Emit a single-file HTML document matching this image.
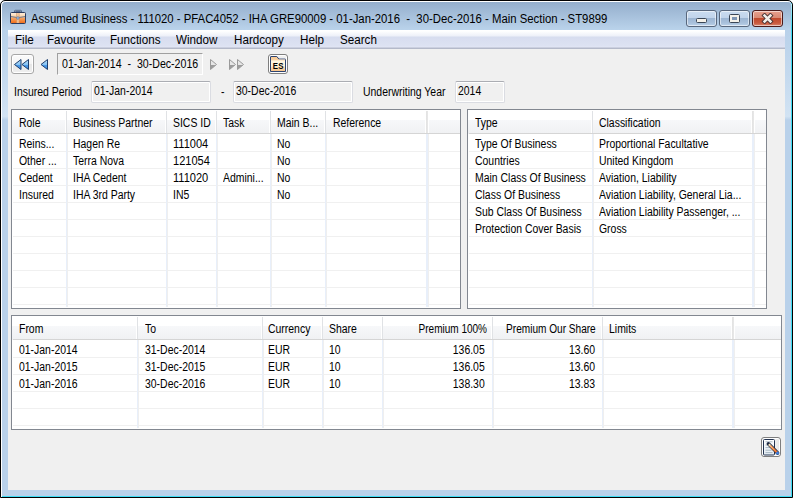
<!DOCTYPE html>
<html><head><meta charset="utf-8"><style>
html,body{margin:0;padding:0;}
body{width:793px;height:498px;overflow:hidden;position:relative;background:#FFFFFF;font-family:"Liberation Sans",sans-serif;}
#frame{position:absolute;left:0;top:0;width:793px;height:498px;box-sizing:border-box;border:1px solid #000;border-radius:5px 5px 0 0;background:#B9D1EA;box-shadow:inset 1px 1px 0 #FFFFFF, inset -1px -1px 0 #3DDCF4;}
.t{position:absolute;white-space:pre;line-height:1;transform-origin:0 0;}
.t.r{transform-origin:100% 0;}
</style></head><body>
<div id="frame"></div>
<div style="position:absolute;left:2px;top:2px;width:789px;height:28px;background:linear-gradient(#94AECC,#BAD3EB);border-radius:4px 4px 0 0"></div>
<svg style="position:absolute;left:9px;top:9px" width="18" height="16" viewBox="0 0 18 16">
<defs><linearGradient id="bc" x1="0" y1="0" x2="0" y2="1"><stop offset="0" stop-color="#FEF0E0"/><stop offset=".4" stop-color="#FAD2A8"/><stop offset=".5" stop-color="#F6A564"/><stop offset="1" stop-color="#F06A14"/></linearGradient>
<linearGradient id="hd" x1="0" y1="0" x2="0" y2="1"><stop offset="0" stop-color="#C8D6E8"/><stop offset="1" stop-color="#6F86A8"/></linearGradient></defs>
<path d="M5.5 3.8 V2.1 Q5.5 1.3 6.3 1.3 H11.7 Q12.5 1.3 12.5 2.1 V3.8 H11.3 V2.6 H6.7 V3.8 Z" fill="url(#hd)" stroke="#3D5275" stroke-width=".8"/>
<rect x="1.5" y="3.5" width="15" height="11" rx="1" fill="url(#bc)" stroke="#2B3C5E"/>
<path d="M2 7.6 Q9 9.6 16 7.6" fill="none" stroke="#5A6A86" stroke-width=".9"/>
<rect x="7.6" y="4" width="2.6" height="10" fill="#F3C89C" opacity=".9"/>
<path d="M7.6 4 V14 M10.2 4 V14" stroke="#C98A5A" stroke-width=".5"/>
<circle cx="8.9" cy="9" r="1.3" fill="#A9C6E6" stroke="#4A6A98" stroke-width=".6"/>
</svg>
<div style="position:absolute;left:2px;top:30px;width:6px;height:90px;background:linear-gradient(#B9D1EA 0%,#C4D9EE 50%,#D2E3F3 96%,#B9D1EA 100%)"></div>
<div style="position:absolute;left:785px;top:30px;width:6px;height:90px;background:linear-gradient(#B9D1EA 0%,#C4D9EE 50%,#D2E3F3 96%,#B9D1EA 100%)"></div>
<div style="position:absolute;left:791px;top:4px;width:1px;height:24px;background:linear-gradient(#B8ECF8,#3DDCF4)"></div>
<div class="t" style="left:30.6px;top:12.84px;font-size:12px;transform:scaleX(0.945);color:#000;">Assumed Business - 111020 - PFAC4052 - IHA GRE90009 - 01-Jan-2016&nbsp; -&nbsp; 30-Dec-2016 - Main Section - ST9899</div>
<div style="position:absolute;left:686px;top:10px;width:31px;height:17px;box-sizing:border-box;border:1px solid #58677D;border-radius:3px;background:linear-gradient(#CADCF0 0%,#C1D4EB 45%,#9DB6D3 50%,#A9C1DC 80%,#BCD2EA 100%);box-shadow:inset 0 0 0 1px rgba(255,255,255,.55)"></div>
<div style="position:absolute;left:719px;top:10px;width:31px;height:17px;box-sizing:border-box;border:1px solid #58677D;border-radius:3px;background:linear-gradient(#CADCF0 0%,#C1D4EB 45%,#9DB6D3 50%,#A9C1DC 80%,#BCD2EA 100%);box-shadow:inset 0 0 0 1px rgba(255,255,255,.55)"></div>
<div style="position:absolute;left:752px;top:10px;width:31px;height:17px;box-sizing:border-box;border:1px solid #4A1A1A;border-radius:3px;background:linear-gradient(#E8A08E 0%,#D98A75 45%,#C04A2E 50%,#C95A3E 80%,#D88670 100%);box-shadow:inset 0 0 0 1px rgba(255,255,255,.55)"></div>
<div style="position:absolute;left:696px;top:18px;width:11px;height:5px;box-sizing:border-box;border:1px solid #3A4656;border-radius:1.5px;background:#F4F1EA"></div>
<div style="position:absolute;left:729px;top:14px;width:11px;height:9px;box-sizing:border-box;border:1px solid #3A4656;border-radius:1.5px;background:#F4F1EA"></div>
<div style="position:absolute;left:732px;top:17px;width:5px;height:3px;background:#7F96B4;border:0"></div>
<svg style="position:absolute;left:761px;top:13px" width="13" height="11" viewBox="0 0 13 11">
<path d="M3.6 2.6 L9.4 8.4 M9.4 2.6 L3.6 8.4" stroke="#4A3434" stroke-width="4.4" stroke-linecap="square"/>
<path d="M3.6 2.6 L9.4 8.4 M9.4 2.6 L3.6 8.4" stroke="#F2EEEA" stroke-width="2.6" stroke-linecap="square"/>
</svg>
<div style="position:absolute;left:8px;top:30px;width:777px;height:19px;background:linear-gradient(#FFFFFF 0px,#FFFFFF 1px,#EDF0F8 6px,#D7DDEF 7px,#DDE2F2 16px,#E2E6F5 17px,#B4B9C9 18px)"></div>
<div class="t" style="left:15.1px;top:33.84px;font-size:12px;transform:scaleX(0.97);color:#000;">File</div>
<div class="t" style="left:47.2px;top:33.84px;font-size:12px;transform:scaleX(0.97);color:#000;">Favourite</div>
<div class="t" style="left:110.2px;top:33.84px;font-size:12px;transform:scaleX(0.97);color:#000;">Functions</div>
<div class="t" style="left:175.8px;top:33.84px;font-size:12px;transform:scaleX(0.97);color:#000;">Window</div>
<div class="t" style="left:234px;top:33.84px;font-size:12px;transform:scaleX(0.97);color:#000;">Hardcopy</div>
<div class="t" style="left:300px;top:33.84px;font-size:12px;transform:scaleX(0.97);color:#000;">Help</div>
<div class="t" style="left:339.5px;top:33.84px;font-size:12px;transform:scaleX(0.97);color:#000;">Search</div>
<div style="position:absolute;left:8px;top:49px;width:777px;height:441px;background:#F0F0F0"></div>
<div style="position:absolute;left:11px;top:54px;width:23px;height:20px;box-sizing:border-box;border:1px solid #A7A7A7;border-radius:3px;background:linear-gradient(#FBFBFB 0%,#F4F4F4 50%,#E6E6E6 52%,#EFEFEF 100%);box-shadow:inset 0 0 0 1px #FFF"></div>
<svg style="position:absolute;left:0;top:0" width="793" height="120">
<defs><linearGradient id="bl" x1="0" y1="0" x2="0" y2="1"><stop offset="0" stop-color="#B9E0FB"/><stop offset=".5" stop-color="#88C4F4"/><stop offset=".55" stop-color="#4C9CEA"/><stop offset="1" stop-color="#3B8AE0"/></linearGradient>
<linearGradient id="gr" x1="0" y1="0" x2="0" y2="1"><stop offset="0" stop-color="#E6E6E6"/><stop offset=".55" stop-color="#E6E6E6"/><stop offset=".56" stop-color="#9C9C9C"/><stop offset="1" stop-color="#9C9C9C"/></linearGradient></defs>
<path d="M21 59.5 L14.5 64.5 L21 69.5 Z" fill="url(#bl)" stroke="#1F3F6E" stroke-linejoin="round"/>
<path d="M28.5 59.5 L22 64.5 L28.5 69.5 Z" fill="url(#bl)" stroke="#1F3F6E" stroke-linejoin="round"/>
<path d="M47.5 59.5 L41 64.5 L47.5 69.5 Z" fill="url(#bl)" stroke="#1F3F6E" stroke-linejoin="round"/>
<path d="M210.5 59.5 L216.5 64.5 L210.5 69.5 Z" fill="url(#gr)" stroke="#9A9A9A" stroke-linejoin="round"/>
<path d="M229.5 59.5 L235.5 64.5 L229.5 69.5 Z" fill="url(#gr)" stroke="#9A9A9A" stroke-linejoin="round"/>
<path d="M237.5 59.5 L243.5 64.5 L237.5 69.5 Z" fill="url(#gr)" stroke="#9A9A9A" stroke-linejoin="round"/>
</svg>
<div style="position:absolute;left:57px;top:53px;width:146px;height:22px;box-sizing:border-box;border-top:1px solid #A0A0A0;border-left:1px solid #A0A0A0;border-right:1px solid #FFFFFF;border-bottom:1px solid #FFFFFF;background:#F0F0F0"></div>
<div class="t" style="left:62px;top:57.84px;font-size:12px;transform:scaleX(0.884);color:#000;">01-Jan-2014&nbsp; -&nbsp; 30-Dec-2016</div>
<div style="position:absolute;left:268px;top:54px;width:20px;height:20px;box-sizing:border-box;border:1px solid #7E7E7E;border-radius:3px;background:#F0F0F0;box-shadow:inset 0 0 0 1px #FFF"></div>
<svg style="position:absolute;left:270px;top:56px" width="16" height="16" viewBox="0 0 16 16">
<defs><linearGradient id="fo" x1="0" y1="0" x2="0" y2="1"><stop offset="0" stop-color="#F7C48A"/><stop offset=".22" stop-color="#F9D3A6"/><stop offset=".3" stop-color="#FFF6E2"/><stop offset=".62" stop-color="#FFF3DA"/><stop offset=".75" stop-color="#FAD9B0"/><stop offset="1" stop-color="#F6C084"/></linearGradient></defs>
<path d="M0.5 15.5 V1 Q0.5 0.5 1 0.5 H6.8 L8.8 3 H15 Q15.5 3 15.5 3.5 V15.5 Z" fill="url(#fo)" stroke="#2E4470"/>
<path d="M9 3.2 H15.2" stroke="#FFFFFF" stroke-width=".6" opacity=".8"/>
<text x="2.8" y="12.6" font-family="Liberation Sans" font-weight="bold" font-size="9.6" fill="#000" transform="scale(.82,1)" transform-origin="2.8 12.6" letter-spacing=".3">ES</text>
</svg>
<div class="t" style="left:14px;top:85.84px;font-size:12px;transform:scaleX(0.87);color:#000;">Insured Period</div>
<div style="position:absolute;left:91px;top:81px;width:120px;height:22px;box-sizing:border-box;border:1px solid #DADCE2;border-top-color:#ABADB3;border-radius:2px;background:#F0F0F0;box-shadow:inset 0 0 0 1px #FFFFFF"></div>
<div class="t" style="left:94px;top:85.34px;font-size:12px;transform:scaleX(0.87);color:#000;">01-Jan-2014</div>
<div class="t" style="left:221px;top:85.84px;font-size:12px;transform:scaleX(0.87);color:#000;">-</div>
<div style="position:absolute;left:233px;top:81px;width:120px;height:22px;box-sizing:border-box;border:1px solid #DADCE2;border-top-color:#ABADB3;border-radius:2px;background:#F0F0F0;box-shadow:inset 0 0 0 1px #FFFFFF"></div>
<div class="t" style="left:236px;top:85.34px;font-size:12px;transform:scaleX(0.87);color:#000;">30-Dec-2016</div>
<div class="t" style="left:362.5px;top:85.84px;font-size:12px;transform:scaleX(0.87);color:#000;">Underwriting Year</div>
<div style="position:absolute;left:455px;top:81px;width:50px;height:22px;box-sizing:border-box;border:1px solid #DADCE2;border-top-color:#ABADB3;border-radius:2px;background:#F0F0F0;box-shadow:inset 0 0 0 1px #FFFFFF"></div>
<div class="t" style="left:458px;top:85.34px;font-size:12px;transform:scaleX(0.87);color:#000;">2014</div>
<div style="position:absolute;left:11px;top:109px;width:450px;height:200px;box-sizing:border-box;border:1px solid #828790;background:#FFFFFF"></div>
<div style="position:absolute;left:12px;top:110px;width:448px;height:24px;background:linear-gradient(#FFFFFF 0px,#FFFFFF 10px,#F7F8FA 10px,#F0F1F3 100%)"></div>
<div style="position:absolute;left:13px;top:133px;width:447px;height:1px;background:#D5D5D5"></div>
<div style="position:absolute;left:65px;top:111px;width:1px;height:22px;background:#FFFFFF"></div>
<div style="position:absolute;left:66px;top:111px;width:1px;height:22px;background:#E0E2E5"></div>
<div style="position:absolute;left:165px;top:111px;width:1px;height:22px;background:#FFFFFF"></div>
<div style="position:absolute;left:166px;top:111px;width:1px;height:22px;background:#E0E2E5"></div>
<div style="position:absolute;left:215px;top:111px;width:1px;height:22px;background:#FFFFFF"></div>
<div style="position:absolute;left:216px;top:111px;width:1px;height:22px;background:#E0E2E5"></div>
<div style="position:absolute;left:269px;top:111px;width:1px;height:22px;background:#FFFFFF"></div>
<div style="position:absolute;left:270px;top:111px;width:1px;height:22px;background:#E0E2E5"></div>
<div style="position:absolute;left:324px;top:111px;width:1px;height:22px;background:#FFFFFF"></div>
<div style="position:absolute;left:325px;top:111px;width:1px;height:22px;background:#E0E2E5"></div>
<div style="position:absolute;left:425px;top:111px;width:1px;height:22px;background:#FFFFFF"></div>
<div style="position:absolute;left:426px;top:111px;width:2px;height:22px;background:linear-gradient(90deg,#E2E2E2,#E8E8E8)"></div>
<div style="position:absolute;left:428px;top:111px;width:1px;height:22px;background:#FFFFFF"></div>
<div style="position:absolute;left:13px;top:151px;width:447px;height:1px;background:#F0F0F0"></div>
<div style="position:absolute;left:13px;top:168px;width:447px;height:1px;background:#F0F0F0"></div>
<div style="position:absolute;left:13px;top:185px;width:447px;height:1px;background:#F0F0F0"></div>
<div style="position:absolute;left:13px;top:202px;width:447px;height:1px;background:#F0F0F0"></div>
<div style="position:absolute;left:13px;top:219px;width:447px;height:1px;background:#F0F0F0"></div>
<div style="position:absolute;left:13px;top:236px;width:447px;height:1px;background:#F0F0F0"></div>
<div style="position:absolute;left:13px;top:253px;width:447px;height:1px;background:#F0F0F0"></div>
<div style="position:absolute;left:13px;top:270px;width:447px;height:1px;background:#F0F0F0"></div>
<div style="position:absolute;left:13px;top:287px;width:447px;height:1px;background:#F0F0F0"></div>
<div style="position:absolute;left:13px;top:304px;width:447px;height:1px;background:#F0F0F0"></div>
<div style="position:absolute;left:66px;top:134px;width:1px;height:173px;background:#E8EFFA"></div>
<div style="position:absolute;left:67px;top:134px;width:1px;height:173px;background:#EFEFEF"></div>
<div style="position:absolute;left:166px;top:134px;width:1px;height:173px;background:#E8EFFA"></div>
<div style="position:absolute;left:167px;top:134px;width:1px;height:173px;background:#EFEFEF"></div>
<div style="position:absolute;left:216px;top:134px;width:1px;height:173px;background:#E8EFFA"></div>
<div style="position:absolute;left:217px;top:134px;width:1px;height:173px;background:#EFEFEF"></div>
<div style="position:absolute;left:270px;top:134px;width:1px;height:173px;background:#E8EFFA"></div>
<div style="position:absolute;left:271px;top:134px;width:1px;height:173px;background:#EFEFEF"></div>
<div style="position:absolute;left:325px;top:134px;width:1px;height:173px;background:#E8EFFA"></div>
<div style="position:absolute;left:326px;top:134px;width:1px;height:173px;background:#EFEFEF"></div>
<div style="position:absolute;left:426px;top:134px;width:1px;height:173px;background:#E8EFFA"></div>
<div style="position:absolute;left:427px;top:134px;width:1px;height:173px;background:#E8EFFA"></div>
<div style="position:absolute;left:428px;top:134px;width:1px;height:173px;background:#EFEFEF"></div>
<div class="t" style="left:18.8px;top:116.84px;font-size:12px;transform:scaleX(0.87);color:#000;">Role</div>
<div class="t" style="left:73.1px;top:116.84px;font-size:12px;transform:scaleX(0.87);color:#000;">Business Partner</div>
<div class="t" style="left:173.4px;top:116.84px;font-size:12px;transform:scaleX(0.87);color:#000;">SICS ID</div>
<div class="t" style="left:223.2px;top:116.84px;font-size:12px;transform:scaleX(0.87);color:#000;">Task</div>
<div class="t" style="left:277px;top:116.84px;font-size:12px;transform:scaleX(0.87);color:#000;">Main B...</div>
<div class="t" style="left:332.5px;top:116.84px;font-size:12px;transform:scaleX(0.87);color:#000;">Reference</div>
<div class="t" style="left:18.8px;top:137.84px;font-size:12px;transform:scaleX(0.87);color:#000;">Reins...</div>
<div class="t" style="left:73.1px;top:137.84px;font-size:12px;transform:scaleX(0.87);color:#000;">Hagen Re</div>
<div class="t" style="left:173.4px;top:137.84px;font-size:12px;transform:scaleX(0.92);color:#000;">111004</div>
<div class="t" style="left:277px;top:137.84px;font-size:12px;transform:scaleX(0.87);color:#000;">No</div>
<div class="t" style="left:18.8px;top:154.84px;font-size:12px;transform:scaleX(0.87);color:#000;">Other ...</div>
<div class="t" style="left:73.1px;top:154.84px;font-size:12px;transform:scaleX(0.87);color:#000;">Terra Nova</div>
<div class="t" style="left:173.4px;top:154.84px;font-size:12px;transform:scaleX(0.92);color:#000;">121054</div>
<div class="t" style="left:277px;top:154.84px;font-size:12px;transform:scaleX(0.87);color:#000;">No</div>
<div class="t" style="left:18.8px;top:171.84px;font-size:12px;transform:scaleX(0.87);color:#000;">Cedent</div>
<div class="t" style="left:73.1px;top:171.84px;font-size:12px;transform:scaleX(0.87);color:#000;">IHA Cedent</div>
<div class="t" style="left:173.4px;top:171.84px;font-size:12px;transform:scaleX(0.92);color:#000;">111020</div>
<div class="t" style="left:223.2px;top:171.84px;font-size:12px;transform:scaleX(0.87);color:#000;">Admini...</div>
<div class="t" style="left:277px;top:171.84px;font-size:12px;transform:scaleX(0.87);color:#000;">No</div>
<div class="t" style="left:18.8px;top:188.84px;font-size:12px;transform:scaleX(0.87);color:#000;">Insured</div>
<div class="t" style="left:73.1px;top:188.84px;font-size:12px;transform:scaleX(0.87);color:#000;">IHA 3rd Party</div>
<div class="t" style="left:173.4px;top:188.84px;font-size:12px;transform:scaleX(0.87);color:#000;">IN5</div>
<div class="t" style="left:277px;top:188.84px;font-size:12px;transform:scaleX(0.87);color:#000;">No</div>
<div style="position:absolute;left:467px;top:109px;width:300px;height:200px;box-sizing:border-box;border:1px solid #828790;background:#FFFFFF"></div>
<div style="position:absolute;left:468px;top:110px;width:298px;height:24px;background:linear-gradient(#FFFFFF 0px,#FFFFFF 10px,#F7F8FA 10px,#F0F1F3 100%)"></div>
<div style="position:absolute;left:469px;top:133px;width:297px;height:1px;background:#D5D5D5"></div>
<div style="position:absolute;left:591px;top:111px;width:1px;height:22px;background:#FFFFFF"></div>
<div style="position:absolute;left:592px;top:111px;width:1px;height:22px;background:#E0E2E5"></div>
<div style="position:absolute;left:751px;top:111px;width:1px;height:22px;background:#FFFFFF"></div>
<div style="position:absolute;left:752px;top:111px;width:2px;height:22px;background:linear-gradient(90deg,#E2E2E2,#E8E8E8)"></div>
<div style="position:absolute;left:754px;top:111px;width:1px;height:22px;background:#FFFFFF"></div>
<div style="position:absolute;left:469px;top:151px;width:297px;height:1px;background:#F0F0F0"></div>
<div style="position:absolute;left:469px;top:168px;width:297px;height:1px;background:#F0F0F0"></div>
<div style="position:absolute;left:469px;top:185px;width:297px;height:1px;background:#F0F0F0"></div>
<div style="position:absolute;left:469px;top:202px;width:297px;height:1px;background:#F0F0F0"></div>
<div style="position:absolute;left:469px;top:219px;width:297px;height:1px;background:#F0F0F0"></div>
<div style="position:absolute;left:469px;top:236px;width:297px;height:1px;background:#F0F0F0"></div>
<div style="position:absolute;left:469px;top:253px;width:297px;height:1px;background:#F0F0F0"></div>
<div style="position:absolute;left:469px;top:270px;width:297px;height:1px;background:#F0F0F0"></div>
<div style="position:absolute;left:469px;top:287px;width:297px;height:1px;background:#F0F0F0"></div>
<div style="position:absolute;left:469px;top:304px;width:297px;height:1px;background:#F0F0F0"></div>
<div style="position:absolute;left:592px;top:134px;width:1px;height:173px;background:#E8EFFA"></div>
<div style="position:absolute;left:593px;top:134px;width:1px;height:173px;background:#EFEFEF"></div>
<div style="position:absolute;left:752px;top:134px;width:1px;height:173px;background:#E8EFFA"></div>
<div style="position:absolute;left:753px;top:134px;width:1px;height:173px;background:#E8EFFA"></div>
<div style="position:absolute;left:754px;top:134px;width:1px;height:173px;background:#EFEFEF"></div>
<div class="t" style="left:474.8px;top:116.84px;font-size:12px;transform:scaleX(0.87);color:#000;">Type</div>
<div class="t" style="left:599.4px;top:116.84px;font-size:12px;transform:scaleX(0.87);color:#000;">Classification</div>
<div class="t" style="left:474.8px;top:137.84px;font-size:12px;transform:scaleX(0.87);color:#000;">Type Of Business</div>
<div class="t" style="left:599.4px;top:137.84px;font-size:12px;transform:scaleX(0.87);color:#000;">Proportional Facultative</div>
<div class="t" style="left:474.8px;top:154.84px;font-size:12px;transform:scaleX(0.87);color:#000;">Countries</div>
<div class="t" style="left:599.4px;top:154.84px;font-size:12px;transform:scaleX(0.87);color:#000;">United Kingdom</div>
<div class="t" style="left:474.8px;top:171.84px;font-size:12px;transform:scaleX(0.87);color:#000;">Main Class Of Business</div>
<div class="t" style="left:599.4px;top:171.84px;font-size:12px;transform:scaleX(0.87);color:#000;">Aviation, Liability</div>
<div class="t" style="left:474.8px;top:188.84px;font-size:12px;transform:scaleX(0.87);color:#000;">Class Of Business</div>
<div class="t" style="left:599.4px;top:188.84px;font-size:12px;transform:scaleX(0.87);color:#000;">Aviation Liability, General Lia...</div>
<div class="t" style="left:474.8px;top:205.84px;font-size:12px;transform:scaleX(0.87);color:#000;">Sub Class Of Business</div>
<div class="t" style="left:599.4px;top:205.84px;font-size:12px;transform:scaleX(0.87);color:#000;">Aviation Liability Passenger, ...</div>
<div class="t" style="left:474.8px;top:222.84px;font-size:12px;transform:scaleX(0.87);color:#000;">Protection Cover Basis</div>
<div class="t" style="left:599.4px;top:222.84px;font-size:12px;transform:scaleX(0.87);color:#000;">Gross</div>
<div style="position:absolute;left:11px;top:315px;width:771px;height:115px;box-sizing:border-box;border:1px solid #828790;background:#FFFFFF"></div>
<div style="position:absolute;left:12px;top:316px;width:769px;height:24px;background:linear-gradient(#FFFFFF 0px,#FFFFFF 10px,#F7F8FA 10px,#F0F1F3 100%)"></div>
<div style="position:absolute;left:13px;top:339px;width:768px;height:1px;background:#D5D5D5"></div>
<div style="position:absolute;left:136px;top:317px;width:1px;height:22px;background:#FFFFFF"></div>
<div style="position:absolute;left:137px;top:317px;width:1px;height:22px;background:#E0E2E5"></div>
<div style="position:absolute;left:261px;top:317px;width:1px;height:22px;background:#FFFFFF"></div>
<div style="position:absolute;left:262px;top:317px;width:1px;height:22px;background:#E0E2E5"></div>
<div style="position:absolute;left:321px;top:317px;width:1px;height:22px;background:#FFFFFF"></div>
<div style="position:absolute;left:322px;top:317px;width:1px;height:22px;background:#E0E2E5"></div>
<div style="position:absolute;left:381px;top:317px;width:1px;height:22px;background:#FFFFFF"></div>
<div style="position:absolute;left:382px;top:317px;width:1px;height:22px;background:#E0E2E5"></div>
<div style="position:absolute;left:491px;top:317px;width:1px;height:22px;background:#FFFFFF"></div>
<div style="position:absolute;left:492px;top:317px;width:1px;height:22px;background:#E0E2E5"></div>
<div style="position:absolute;left:601px;top:317px;width:1px;height:22px;background:#FFFFFF"></div>
<div style="position:absolute;left:602px;top:317px;width:1px;height:22px;background:#E0E2E5"></div>
<div style="position:absolute;left:731px;top:317px;width:1px;height:22px;background:#FFFFFF"></div>
<div style="position:absolute;left:732px;top:317px;width:2px;height:22px;background:linear-gradient(90deg,#E2E2E2,#E8E8E8)"></div>
<div style="position:absolute;left:734px;top:317px;width:1px;height:22px;background:#FFFFFF"></div>
<div style="position:absolute;left:13px;top:357px;width:768px;height:1px;background:#F0F0F0"></div>
<div style="position:absolute;left:13px;top:374px;width:768px;height:1px;background:#F0F0F0"></div>
<div style="position:absolute;left:13px;top:391px;width:768px;height:1px;background:#F0F0F0"></div>
<div style="position:absolute;left:13px;top:408px;width:768px;height:1px;background:#F0F0F0"></div>
<div style="position:absolute;left:13px;top:425px;width:768px;height:1px;background:#F0F0F0"></div>
<div style="position:absolute;left:137px;top:340px;width:1px;height:88px;background:#E8EFFA"></div>
<div style="position:absolute;left:138px;top:340px;width:1px;height:88px;background:#EFEFEF"></div>
<div style="position:absolute;left:262px;top:340px;width:1px;height:88px;background:#E8EFFA"></div>
<div style="position:absolute;left:263px;top:340px;width:1px;height:88px;background:#EFEFEF"></div>
<div style="position:absolute;left:322px;top:340px;width:1px;height:88px;background:#E8EFFA"></div>
<div style="position:absolute;left:323px;top:340px;width:1px;height:88px;background:#EFEFEF"></div>
<div style="position:absolute;left:382px;top:340px;width:1px;height:88px;background:#E8EFFA"></div>
<div style="position:absolute;left:383px;top:340px;width:1px;height:88px;background:#EFEFEF"></div>
<div style="position:absolute;left:492px;top:340px;width:1px;height:88px;background:#E8EFFA"></div>
<div style="position:absolute;left:493px;top:340px;width:1px;height:88px;background:#EFEFEF"></div>
<div style="position:absolute;left:602px;top:340px;width:1px;height:88px;background:#E8EFFA"></div>
<div style="position:absolute;left:603px;top:340px;width:1px;height:88px;background:#EFEFEF"></div>
<div style="position:absolute;left:732px;top:340px;width:1px;height:88px;background:#E8EFFA"></div>
<div style="position:absolute;left:733px;top:340px;width:1px;height:88px;background:#E8EFFA"></div>
<div style="position:absolute;left:734px;top:340px;width:1px;height:88px;background:#EFEFEF"></div>
<div class="t" style="left:18.6px;top:322.84px;font-size:12px;transform:scaleX(0.87);color:#000;">From</div>
<div class="t" style="left:144.8px;top:322.84px;font-size:12px;transform:scaleX(0.87);color:#000;">To</div>
<div class="t" style="left:268.3px;top:322.84px;font-size:12px;transform:scaleX(0.87);color:#000;">Currency</div>
<div class="t" style="left:329.4px;top:322.84px;font-size:12px;transform:scaleX(0.87);color:#000;">Share</div>
<div class="t" style="left:609px;top:322.84px;font-size:12px;transform:scaleX(0.87);color:#000;">Limits</div>
<div class="t r" style="right:306.4px;top:322.84px;font-size:12px;transform:scaleX(0.835);color:#000;">Premium 100%</div>
<div class="t r" style="right:197.5px;top:322.84px;font-size:12px;transform:scaleX(0.84);color:#000;">Premium Our Share</div>
<div class="t" style="left:19.2px;top:343.84px;font-size:12px;transform:scaleX(0.87);color:#000;">01-Jan-2014</div>
<div class="t" style="left:144.8px;top:343.84px;font-size:12px;transform:scaleX(0.87);color:#000;">31-Dec-2014</div>
<div class="t" style="left:268.3px;top:343.84px;font-size:12px;transform:scaleX(0.87);color:#000;">EUR</div>
<div class="t" style="left:329.4px;top:343.84px;font-size:12px;transform:scaleX(0.87);color:#000;">10</div>
<div class="t r" style="right:308px;top:343.84px;font-size:12px;transform:scaleX(0.87);color:#000;">136.05</div>
<div class="t r" style="right:198px;top:343.84px;font-size:12px;transform:scaleX(0.87);color:#000;">13.60</div>
<div class="t" style="left:19.2px;top:360.84px;font-size:12px;transform:scaleX(0.87);color:#000;">01-Jan-2015</div>
<div class="t" style="left:144.8px;top:360.84px;font-size:12px;transform:scaleX(0.87);color:#000;">31-Dec-2015</div>
<div class="t" style="left:268.3px;top:360.84px;font-size:12px;transform:scaleX(0.87);color:#000;">EUR</div>
<div class="t" style="left:329.4px;top:360.84px;font-size:12px;transform:scaleX(0.87);color:#000;">10</div>
<div class="t r" style="right:308px;top:360.84px;font-size:12px;transform:scaleX(0.87);color:#000;">136.05</div>
<div class="t r" style="right:198px;top:360.84px;font-size:12px;transform:scaleX(0.87);color:#000;">13.60</div>
<div class="t" style="left:19.2px;top:377.84px;font-size:12px;transform:scaleX(0.87);color:#000;">01-Jan-2016</div>
<div class="t" style="left:144.8px;top:377.84px;font-size:12px;transform:scaleX(0.87);color:#000;">30-Dec-2016</div>
<div class="t" style="left:268.3px;top:377.84px;font-size:12px;transform:scaleX(0.87);color:#000;">EUR</div>
<div class="t" style="left:329.4px;top:377.84px;font-size:12px;transform:scaleX(0.87);color:#000;">10</div>
<div class="t r" style="right:308px;top:377.84px;font-size:12px;transform:scaleX(0.87);color:#000;">138.30</div>
<div class="t r" style="right:198px;top:377.84px;font-size:12px;transform:scaleX(0.87);color:#000;">13.83</div>
<div style="position:absolute;left:761px;top:437px;width:20px;height:20px;box-sizing:border-box;border:1px solid #7E7E7E;border-radius:3px;background:linear-gradient(90deg,#F0F0F0 70%,#E4E4E4);box-shadow:inset 0 0 0 1px #FFF"></div>
<svg style="position:absolute;left:761px;top:437px" width="20" height="20" viewBox="0 0 20 20">
<defs><linearGradient id="pc" x1="0" y1="0" x2="1" y2="1"><stop offset="0" stop-color="#FDBA80"/><stop offset="1" stop-color="#EE6A1E"/></linearGradient>
<linearGradient id="dc" x1="0" y1="0" x2="0" y2="1"><stop offset="0" stop-color="#FFFFFF"/><stop offset="1" stop-color="#E3ECF4"/></linearGradient></defs>
<rect x="2.5" y="2.5" width="11" height="15.5" rx="1" fill="url(#dc)" stroke="#22324F"/>
<path d="M4.5 4.8 H11.5 M4.5 8 H7.5 M4.5 10.6 H9.5 M4.5 13.2 H10.5 M4.5 15.6 H11.5" stroke="#9FB0BC" stroke-width=".9"/>
<path d="M7.4 6.8 L16.6 16" stroke="#1E2A44" stroke-width="3.6" stroke-linecap="round"/>
<path d="M9 8.4 L16 15.4" stroke="url(#pc)" stroke-width="2.1" stroke-linecap="butt"/>
<path d="M7.8 7.2 L9.1 8.5" stroke="#FBE8BE" stroke-width="2" stroke-linecap="butt"/>
<circle cx="16.5" cy="16" r="1.5" fill="#3E7FE2"/>

</svg>
</body></html>
